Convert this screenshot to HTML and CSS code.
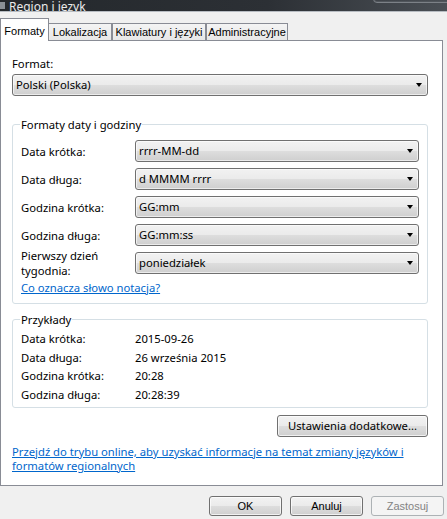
FILE: index.html
```html
<!DOCTYPE html>
<html lang="pl">
<head>
<meta charset="utf-8">
<title>Region i język</title>
<link rel="stylesheet" href="styles.css">
</head>
<body>
<div class="window">
  <div class="titlebar">
    <span class="title-icon"></span>
    <span class="title-text">Region i język</span>
    <span class="caption-buttons"></span>
  </div>

  <div class="tabs">
    <div class="tab active">Formaty</div>
    <div class="tab tab-loc">Lokalizacja</div>
    <div class="tab tab-kbd">Klawiatury i języki</div>
    <div class="tab tab-adm">Administracyjne</div>
  </div>

  <div class="panel">
    <div class="field-label">Format:</div>
    <div class="combo"><span class="combo-value">Polski (Polska)</span><span class="arrow"></span></div>

    <fieldset class="group group-formats">
      <legend>Formaty daty i godziny</legend>
      <div class="row">
        <span class="row-label">Data krótka:</span>
        <div class="combo combo-row"><span class="combo-value">rrrr-MM-dd</span><span class="arrow"></span></div>
      </div>
      <div class="row">
        <span class="row-label">Data długa:</span>
        <div class="combo combo-row"><span class="combo-value">d MMMM rrrr</span><span class="arrow"></span></div>
      </div>
      <div class="row">
        <span class="row-label">Godzina krótka:</span>
        <div class="combo combo-row"><span class="combo-value">GG:mm</span><span class="arrow"></span></div>
      </div>
      <div class="row">
        <span class="row-label">Godzina długa:</span>
        <div class="combo combo-row"><span class="combo-value">GG:mm:ss</span><span class="arrow"></span></div>
      </div>
      <div class="row">
        <span class="row-label two-line">Pierwszy dzień<br>tygodnia:</span>
        <div class="combo combo-row"><span class="combo-value">poniedziałek</span><span class="arrow"></span></div>
      </div>
      <a class="link notation-link" href="#">Co oznacza słowo notacja?</a>
    </fieldset>

    <fieldset class="group group-examples">
      <legend>Przykłady</legend>
      <div class="example"><span class="row-label">Data krótka:</span><span>2015-09-26</span></div>
      <div class="example"><span class="row-label">Data długa:</span><span>26 września 2015</span></div>
      <div class="example"><span class="row-label">Godzina krótka:</span><span>20:28</span></div>
      <div class="example"><span class="row-label">Godzina długa:</span><span>20:28:39</span></div>
    </fieldset>

    <div class="extra-row">
      <button class="btn btn-extra" type="button">Ustawienia dodatkowe...</button>
    </div>

    <a class="link online-link" href="#">Przejdź do trybu online, aby uzyskać informacje na temat zmiany języków i<br>formatów regionalnych</a>
  </div>

  <div class="footer">
    <button class="btn btn-dialog" type="button">OK</button>
    <button class="btn btn-dialog" type="button">Anuluj</button>
    <button class="btn btn-dialog" type="button" disabled>Zastosuj</button>
  </div>
</div>
</body>
</html>
```

FILE: styles.css
```css
html, body {
  margin: 0;
  padding: 0;
}

*, *::before, *::after {
  box-sizing: border-box;
}

body {
  width: 447px;
  height: 519px;
  overflow: hidden;
  background: #f0f0f0;
  font-family: "Noto Sans", "Open Sans", sans-serif;
  font-size: 11.25px;
  color: #000;
}

.window {
  display: flex;
  flex-direction: column;
  width: 447px;
  height: 519px;
}

.titlebar {
  position: relative;
  height: 12px;
  flex: none;
  overflow: hidden;
  background: linear-gradient(to right, #24282c 0%, #2c3035 60%, #4a4f55 100%);
  border-bottom: 1px solid #b7bcc2;
  display: flex;
  align-items: flex-end;
}

.title-icon {
  width: 5px;
  height: 7px;
  margin-bottom: 2px;
  background: #8a9096;
}

.title-text {
  margin-left: 4px;
  margin-bottom: -3px;
  color: #fff;
  font-family: "Noto Sans", sans-serif;
  font-size: 12px;
  line-height: 15px;
  opacity: 0.9;
}

.caption-buttons {
  position: absolute;
  right: -6px;
  top: -14px;
  width: 80px;
  height: 17px;
  border: 1px solid #7c8187;
  border-radius: 4px;
  box-shadow: inset 0 0 0 1px #50555b;
}

/* Tab strip */
.tabs {
  flex: none;
  height: 28px;
  display: flex;
  align-items: flex-end;
  position: relative;
  z-index: 1;
  font-family: "Liberation Sans", Arial, sans-serif;
  font-size: 11px;
}

.tab {
  height: 17px;
  line-height: 17px;
  text-align: center;
  border: 1px solid #898c95;
  border-bottom: none;
  background: linear-gradient(to bottom, #f4f4f4, #e7e7e7);
  white-space: nowrap;
}

.tab-loc { width: 63px; border-left: none; }
.tab-kbd { width: 94px; }
.tab-adm { width: 82px; }

.tab + .tab:not(.tab-loc) {
  margin-left: 0;
}

.tab-kbd,
.tab-adm {
  border-left: 1px solid #898c95;
}

.tab.active {
  width: 49px;
  height: 23px;
  line-height: 24px;
  margin-bottom: -1px;
  background: #fff;
}

/* Tab page */
.panel {
  flex: none;
  width: 443px;
  height: 446px;
  padding: 0 14px 0 11px;
  background: #fff;
  border: 1px solid #898c95;
  display: flex;
  flex-direction: column;
  line-height: 15px;
}

.field-label {
  margin-top: 15px;
}

.combo {
  height: 22px;
  margin-top: 3px;
  border: 1px solid #707070;
  border-radius: 3px;
  background: linear-gradient(to bottom, #f2f2f2 0%, #ebebeb 48%, #dddddd 52%, #cfcfcf 100%);
  box-shadow: inset 0 0 0 1px rgba(255, 255, 255, 0.6);
  display: flex;
  align-items: center;
  justify-content: space-between;
  padding: 0 4px 0 3px;
}

.combo-value {
  line-height: 20px;
  white-space: nowrap;
}

.arrow {
  width: 0;
  height: 0;
  border-left: 3.5px solid transparent;
  border-right: 3.5px solid transparent;
  border-top: 4px solid #000;
  margin-right: 1px;
}

.group {
  margin: 0;
  border: 1px solid #d5dfe5;
  border-radius: 3px;
  padding: 0 8px 0 7px;
  min-width: 0;
}

.group legend {
  padding: 0 1px;
  line-height: 15px;
}

.group-formats {
  margin-top: 21px;
  padding-top: 8px;
  padding-bottom: 8px;
}

.row {
  display: flex;
  align-items: center;
  margin-bottom: 6px;
  padding-left: 1px;
}

.row-label {
  width: 114px;
  flex: none;
  white-space: nowrap;
}

.two-line {
  margin: -4px 0;
}

.combo-row {
  flex: 1;
  margin-top: 0;
}

.link {
  color: #0066cc;
  text-decoration: underline;
}

.notation-link {
  align-self: flex-start;
  margin-top: 4px;
  padding-left: 1px;
}

.group-examples {
  margin-top: 8px;
  padding-top: 3px;
  padding-bottom: 2px;
}

.example {
  display: flex;
  line-height: 18.7px;
  padding-left: 1px;
}

.extra-row {
  display: flex;
  justify-content: flex-end;
  margin-top: 7px;
}

.btn {
  font-family: "Noto Sans", "Open Sans", sans-serif;
  font-size: 11.25px;
  color: #000;
  border: 1px solid #707070;
  border-radius: 3px;
  background: linear-gradient(to bottom, #f2f2f2 0%, #ebebeb 48%, #dddddd 52%, #cfcfcf 100%);
  box-shadow: inset 0 0 0 1px rgba(255, 255, 255, 0.7);
  padding: 0;
  margin: 0;
}

.btn-extra {
  width: 151px;
  height: 22px;
}

.online-link {
  margin-top: 8px;
  line-height: 14px;
}

.footer {
  flex: none;
  display: flex;
  justify-content: flex-end;
  gap: 8px;
  padding-top: 10px;
  padding-right: 3px;
}

.btn-dialog {
  width: 73px;
  height: 20px;
  font-family: "Liberation Sans", Arial, sans-serif;
  font-size: 11px;
}

.btn-dialog:disabled {
  color: #838383;
  border-color: #adb2b5;
  background: #f4f4f4;
  box-shadow: none;
}
```
